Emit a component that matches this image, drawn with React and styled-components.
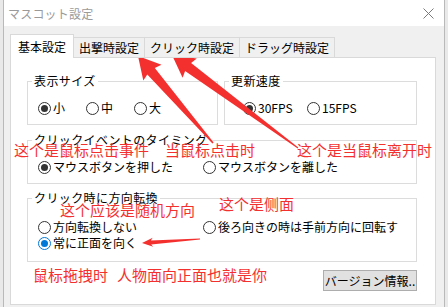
import React from "react";
import styled, { createGlobalStyle } from "styled-components";

const GlobalStyle = createGlobalStyle`
  html, body {
    margin: 0;
    padding: 0;
    background: #e9e9e9;
  }
  body {
    font-family: "Noto Sans CJK JP", "Noto Sans", sans-serif;
    color: #000;
  }
  * {
    box-sizing: border-box;
  }
`;

const Screen = styled.div`
  position: relative;
  width: 448px;
  height: 307px;
  overflow: hidden;
  display: flex;
  padding: 0 3px;
  background: #e9e9e9;
`;

const Window = styled.div`
  flex: 1;
  display: flex;
  flex-direction: column;
  border-left: 1px solid #b9b9b9;
  border-right: 1px solid #b9b9b9;
  background: #f0f0f0;
`;

const TitleBar = styled.div`
  height: 26px;
  flex: none;
  display: flex;
  align-items: center;
  justify-content: space-between;
  padding: 0 10px 0 4px;
  background: #fff;
`;

const Title = styled.span`
  font-size: 12px;
  color: #9a9a9a;
  letter-spacing: 0.2px;
`;

const Body = styled.div`
  flex: 1;
  display: flex;
  flex-direction: column;
  padding: 8px 8px 2px 6px;
`;

const TabStrip = styled.div`
  position: relative;
  z-index: 1;
  height: 24px;
  margin-bottom: -1px;
  display: flex;
  align-items: flex-end;
`;

const Tab = styled.div`
  height: ${(p) => (p.$active ? 24 : 21)}px;
  display: flex;
  align-items: center;
  padding: 0 ${(p) => (p.$active ? 7 : 5)}px;
  margin-left: ${(p) => (p.$first ? 0 : -1)}px;
  border: 1px solid #d9d9d9;
  border-bottom: ${(p) => (p.$active ? "none" : "1px solid #d9d9d9")};
  background: ${(p) => (p.$active ? "#fff" : "#f0f0f0")};
  font-size: 12px;
  line-height: 14px;
  white-space: nowrap;
`;

const Panel = styled.div`
  flex: 1;
  display: flex;
  flex-direction: column;
  padding: 16px 18px 0 16px;
  background: #fff;
  border: 1px solid #d9d9d9;
`;

const TopRow = styled.div`
  display: grid;
  grid-template-columns: 191px 1fr;
  gap: 6px;
`;

const Group = styled.fieldset`
  margin: ${(p) => p.$mt || 0}px 0 0;
  padding: ${(p) => p.$pt}px 0 ${(p) => p.$pb}px;
  border: 1px solid #dcdcdc;
  min-width: 0;
`;

const Legend = styled.legend`
  margin-left: 4px;
  padding: 0 2px;
  font-size: 12px;
  line-height: 14px;
  letter-spacing: 0.4px;
`;

const RadioList = styled.div`
  display: flex;
  flex-direction: column;
  gap: 2px;
`;

const RadioRow = styled.div`
  display: grid;
  grid-auto-flow: column;
  grid-auto-columns: ${(p) => p.$col}px;
  padding-left: ${(p) => p.$indent}px;
  height: 14px;
  align-items: center;
`;

const Option = styled.label`
  display: flex;
  align-items: center;
  gap: 2px;
  font-size: 12px;
  line-height: 14px;
  white-space: nowrap;
`;

const Circle = styled.span`
  position: relative;
  flex: none;
  width: 13px;
  height: 13px;
  border-radius: 50%;
  border: 1px solid ${(p) => (p.$focus ? "#0078d7" : "#333")};
  background: #fff;
  &::after {
    content: "";
    display: ${(p) => (p.$checked ? "block" : "none")};
    position: absolute;
    left: 2px;
    top: 2px;
    width: 7px;
    height: 7px;
    border-radius: 50%;
    background: ${(p) => (p.$focus ? "#0078d7" : "#333")};
  }
`;

const Footer = styled.div`
  display: flex;
  justify-content: flex-end;
  margin-top: 8px;
`;

const Button = styled.div`
  width: 94px;
  height: 21px;
  display: flex;
  align-items: center;
  justify-content: center;
  background: #e1e1e1;
  border: 1px solid #adadad;
  font-size: 12px;
  white-space: nowrap;
`;

const Overlay = styled.svg`
  position: absolute;
  left: 0;
  top: 0;
  pointer-events: none;
`;

const Note = styled.div`
  position: absolute;
  left: ${(p) => p.$x}px;
  top: ${(p) => p.$y}px;
  font-family: "Noto Sans CJK SC", "Noto Sans", sans-serif;
  font-size: 15px;
  line-height: 15px;
  color: #f4302f;
  white-space: nowrap;
  pointer-events: none;
`;

const RED = "#f4302f";

// tapered arrow: tip, tail, head length, head half width, neck half width, tail half width
const arrow = (tx, ty, sx, sy, L, W, n, t) => {
  const dx = tx - sx;
  const dy = ty - sy;
  const len = Math.hypot(dx, dy);
  const ux = dx / len;
  const uy = dy / len;
  const px = -uy;
  const py = ux;
  const bx = tx - ux * L;
  const by = ty - uy * L;
  const nx = bx + ux * 2;
  const ny = by + uy * 2;
  const pts = [
    [tx, ty],
    [bx + px * W, by + py * W],
    [nx + px * n, ny + py * n],
    [sx + px * t, sy + py * t],
    [sx - px * t, sy - py * t],
    [nx - px * n, ny - py * n],
    [bx - px * W, by - py * W],
  ];
  return pts.map((p) => p.map((v) => v.toFixed(1)).join(",")).join(" ");
};

function Radio({ label, checked, focus }) {
  return (
    <Option>
      <Circle $checked={checked} $focus={focus} />
      {label}
    </Option>
  );
}

function CloseIcon() {
  return (
    <svg width="11" height="11" viewBox="0 0 11 11">
      <path d="M0.5 0.5 L10.5 10.5 M10.5 0.5 L0.5 10.5" stroke="#7a7a7a" strokeWidth="1" fill="none" />
    </svg>
  );
}

export default function App() {
  return (
    <Screen>
      <GlobalStyle />
      <Window>
        <TitleBar>
          <Title>マスコット設定</Title>
          <CloseIcon />
        </TitleBar>
        <Body>
          <TabStrip>
            <Tab $active $first>基本設定</Tab>
            <Tab>出撃時設定</Tab>
            <Tab>クリック時設定</Tab>
            <Tab>ドラッグ時設定</Tab>
          </TabStrip>
          <Panel>
            <TopRow>
              <Group $pt={13} $pb={9}>
                <Legend>表示サイズ</Legend>
                <RadioRow $col={48} $indent={10}>
                  <Radio label="小" checked />
                  <Radio label="中" />
                  <Radio label="大" />
                </RadioRow>
              </Group>
              <Group $pt={13} $pb={9}>
                <Legend>更新速度</Legend>
                <RadioRow $col={64} $indent={18}>
                  <Radio label="30FPS" checked />
                  <Radio label="15FPS" />
                </RadioRow>
              </Group>
            </TopRow>
            <Group $mt={8} $pt={13} $pb={9}>
              <Legend>クリックイベントのタイミング</Legend>
              <RadioRow $col={165} $indent={10}>
                <Radio label="マウスボタンを押した" checked />
                <Radio label="マウスボタンを離した" />
              </RadioRow>
            </Group>
            <Group $mt={7} $pt={15} $pb={11}>
              <Legend>クリック時に方向転換</Legend>
              <RadioList>
                <RadioRow $col={165} $indent={10}>
                  <Radio label="方向転換しない" />
                  <Radio label="後ろ向きの時は手前方向に回転す" />
                </RadioRow>
                <RadioRow $col={165} $indent={10}>
                  <Radio label="常に正面を向く" checked focus />
                </RadioRow>
              </RadioList>
            </Group>
            <Footer>
              <Button>バージョン情報..</Button>
            </Footer>
          </Panel>
        </Body>
      </Window>

      <Overlay width="448" height="307" viewBox="0 0 448 307">
        <polygon points={arrow(138, 56, 213, 143, 22, 12, 5, 0.8)} fill={RED} />
        <polygon points={arrow(172, 55, 298, 148, 22, 12, 5, 0.5)} fill={RED} />
        <polygon points={arrow(142, 243, 200, 239, 11, 4.5, 2, 0.5)} fill={RED} />
      </Overlay>
      <Note $x={14} $y={142}>这个是鼠标点击事件</Note>
      <Note $x={165} $y={142}>当鼠标点击时</Note>
      <Note $x={297} $y={142}>这个是当鼠标离开时</Note>
      <Note $x={60} $y={202}>这个应该是随机方向</Note>
      <Note $x={219} $y={196}>这个是侧面</Note>
      <Note $x={33} $y={267}>鼠标拖拽时</Note>
      <Note $x={117} $y={267}>人物面向正面也就是你</Note>
    </Screen>
  );
}
